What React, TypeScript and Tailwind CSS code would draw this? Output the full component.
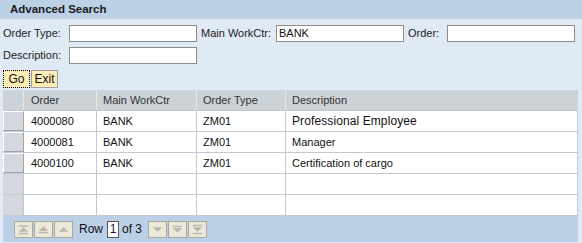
import React from "react";

const font = { fontFamily: '"Liberation Sans", Arial, sans-serif' };

function PagerBtn({ kind }: { kind: string }) {
  const c = "#b8b8b0";
  let shapes: React.ReactNode = null;
  if (kind === "first") {
    shapes = (
      <>
        <rect x="4" y="3" width="10" height="1.5" fill={c} />
        <polygon points="9,5 14,10 4,10" fill={c} />
        <rect x="4" y="11" width="10" height="1.5" fill={c} />
      </>
    );
  } else if (kind === "pageup") {
    shapes = (
      <>
        <polygon points="9,4 14,9 4,9" fill={c} />
        <rect x="4" y="10" width="10" height="1.5" fill={c} />
      </>
    );
  } else if (kind === "up") {
    shapes = <polygon points="9,5 14,10 4,10" fill={c} />;
  } else if (kind === "down") {
    shapes = <polygon points="9,10 14,5 4,5" fill={c} />;
  } else if (kind === "pagedown") {
    shapes = (
      <>
        <rect x="4" y="3.5" width="10" height="1.5" fill={c} />
        <polygon points="9,11 14,6 4,6" fill={c} />
      </>
    );
  } else {
    shapes = (
      <>
        <rect x="4" y="2.5" width="10" height="1.5" fill={c} />
        <polygon points="9,10 14,5 4,5" fill={c} />
        <rect x="4" y="11" width="10" height="1.5" fill={c} />
      </>
    );
  }
  return (
    <div className="w-[19px] h-[17px] bg-[#ece9d8] border border-[#a9a9a2] flex items-center justify-center">
      <svg width="17" height="15" viewBox="0 0 18 15">
        {shapes}
      </svg>
    </div>
  );
}

const rows = [
  { o: "4000080", m: "BANK", t: "ZM01", d: "Professional Employee", big: true },
  { o: "4000081", m: "BANK", t: "ZM01", d: "Manager" },
  { o: "4000100", m: "BANK", t: "ZM01", d: "Certification of cargo" },
];

export default function App() {
  return (
    <div
      className="w-[582px] h-[243px] bg-[#dfeaf4] text-[11px] text-[#222] overflow-hidden flex flex-col"
      style={font}
    >
      <div className="h-[19px] bg-[#bcd1e6] pl-[10px] flex items-center font-bold text-[11.5px] text-[#1a1a1a] shrink-0">
        Advanced Search
      </div>
      <div className="pl-[3px] pt-[6px] flex flex-col">
        <div className="flex items-center h-[17px]">
          <span className="w-[66px] shrink-0">Order Type:</span>
          <div className="w-[128px] h-[17px] shrink-0 bg-white border border-[#8c8c8c]" />
          <span className="w-[79px] shrink-0 pl-[4px]">Main WorkCtr:</span>
          <div className="w-[128px] h-[17px] shrink-0 bg-white border border-[#8c8c8c] pl-[2px] leading-[15px] text-[#111]">
            BANK
          </div>
          <span className="w-[43px] shrink-0 pl-[4px]">Order:</span>
          <div className="w-[128px] h-[17px] shrink-0 bg-white border border-[#8c8c8c]" />
        </div>
        <div className="flex items-center h-[17px] mt-[5px]">
          <span className="w-[66px]">Description:</span>
          <div className="w-[128px] h-[17px] bg-white border border-[#8c8c8c]" />
        </div>
        <div className="flex h-[18px] mt-[6px] gap-[1px]">
          <div className="w-[27px] h-[18px] bg-[#fbedb5] border border-dotted border-black flex items-center justify-center text-[12px] text-[#111]">
            Go
          </div>
          <div className="w-[27px] h-[18px] bg-[#fbedb5] border border-[#a0a0a0] flex items-center justify-center text-[12px] text-[#111]">
            Exit
          </div>
        </div>
      </div>
      <div className="ml-[3px] mt-[2px] w-[575px] bg-white">
        <div className="flex h-[20px] bg-[#cdd2d7] text-[#333]">
          <div className="w-[21px] border-r border-[#e4e6e9]" />
          <div className="w-[73px] border-r border-[#e4e6e9] pl-[7px] flex items-center">Order</div>
          <div className="w-[100px] border-r border-[#e4e6e9] pl-[6px] flex items-center">Main WorkCtr</div>
          <div className="w-[89px] border-r border-[#e4e6e9] pl-[6px] flex items-center">Order Type</div>
          <div className="flex-1 pl-[6px] flex items-center">Description</div>
        </div>
        {rows.map((r) => (
          <div key={r.o} className="flex h-[21px] border-t border-[#c3c8d1] text-[#111]">
            <div className="w-[21px] bg-[#d4d7dc] border-t border-l border-white border-b border-r border-b-[#9ea3aa] border-r-[#9ea3aa]" />
            <div className="w-[73px] border-r border-[#c3c8d1] pl-[7px] flex items-center">{r.o}</div>
            <div className="w-[100px] border-r border-[#c3c8d1] pl-[6px] flex items-center">{r.m}</div>
            <div className="w-[89px] border-r border-[#c3c8d1] pl-[6px] flex items-center">{r.t}</div>
            <div
              className={
                "flex-1 pl-[6px] flex items-center border-r border-[#c3c8d1] " +
                (r.big ? "text-[12px] tracking-[0.1px]" : "")
              }
            >
              {r.d}
            </div>
          </div>
        ))}
        {[0, 1].map((i) => (
          <div key={i} className="flex h-[21px] border-t border-[#c3c8d1]">
            <div className="w-[21px] bg-[#d4d7db] border-r border-[#c3c8d1]" />
            <div className="w-[73px] border-r border-[#c3c8d1]" />
            <div className="w-[100px] border-r border-[#c3c8d1]" />
            <div className="w-[89px] border-r border-[#c3c8d1]" />
            <div className="flex-1 border-r border-[#c3c8d1]" />
          </div>
        ))}
      </div>
      <div className="ml-[3px] w-[575px] h-[27px] bg-[#bbd0e6] border-t border-[#c3c8d1] flex items-center pl-[11px] gap-[1px] text-[12px] text-[#111]">
        <PagerBtn kind="first" />
        <PagerBtn kind="pageup" />
        <PagerBtn kind="up" />
        <span className="ml-[5px]">Row</span>
        <div className="ml-[3px] w-[12px] h-[17px] bg-white border border-[#555] flex items-center justify-center text-[#2a0a4a]">
          1
        </div>
        <span className="ml-[2px] mr-[5px]">of 3</span>
        <PagerBtn kind="down" />
        <PagerBtn kind="pagedown" />
        <PagerBtn kind="last" />
      </div>
    </div>
  );
}
